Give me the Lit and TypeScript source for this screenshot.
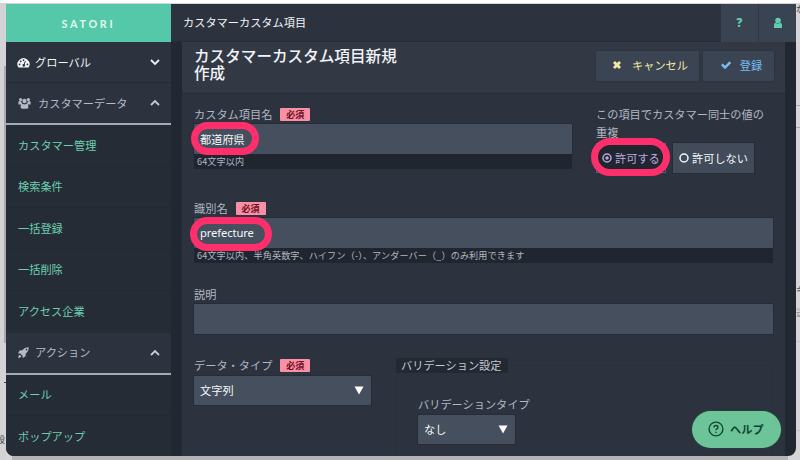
import { LitElement, html, css, svg } from "lit";
import { customElement, property } from "lit/decorators.js";

const gauge = svg`<path fill-rule="evenodd" d="M1.6 12.500A6.500 6.500 0 1 1 12.4 12.500Z M2.800 8.200a.9.9 0 1 0 .01 0Z M4 4.900a.9.9 0 1 0 .01 0Z M7 3.500a.9.9 0 1 0 .01 0Z M11.200 8.200a.9.9 0 1 0 .01 0Z M8.600 5.200L7.300 8.600A1.400 1.400 0 1 0 8.300 9L9.500 5.500Z"/>`;
const users = svg`<circle cx="2.8" cy="2.8" r="1.7"/><circle cx="11.2" cy="2.8" r="1.7"/><circle cx="7" cy="4.4" r="2.4"/><path d="M.4 8V6q0-1.600 1.500-1.600L3.700 5q0 2 1 2.500Q3.400 7.400 3 8ZM13.600 8V6q0-1.600-1.500-1.600L10.300 5q0 2-1 2.500Q10.600 7.400 11 8ZM2.800 11q0-3.700 2.200-3.700Q7 8.600 9 7.300q2.200 0 2.200 3.700 0 1.600-1.600 1.600H4.400Q2.800 12.600 2.800 11Z"/>`;
const rocket = svg`<path fill-rule="evenodd" d="M12.600 1.400Q8.300 1.100 5.700 4.600L2.900 4.800 1 7.900 3.500 8 6 10.500 6.100 13 9.200 11.100 9.400 8.300Q12.900 5.700 12.600 1.400ZM10.300 3a.8.8 0 1 0 .01 0ZM3 9.300Q1.300 9.900 1.200 12.800 4.100 12.700 4.700 11Z"/>`;

@customElement("nav-head")
class NavHead extends LitElement {
  @property() icon = "";
  @property() label = "";
  @property({ type: Boolean, reflect: true }) open = false;
  static styles = css`
    :host { display: flex; align-items: center; box-sizing: border-box; height: 41px; padding: 0 10px 0 11px; color: #f3f5f8; font-size: 11.2px; background: #2c333e; border-bottom: 1px solid #252b35; }
    :host([open]) { height: 42px; color: #b4bbc8; border-bottom: 2px solid #a3abb7; }
    .icon { width: 13px; height: 13px; fill: currentColor; flex: none; }
    .icon.wide { margin-left: 1px; }
    .label { flex: 1; margin-left: 5px; padding-bottom: 1px; white-space: nowrap; }
    .label.wide { margin-left: 7px; }
    .chev { width: 12px; height: 12px; fill: none; stroke: #eef0f4; stroke-width: 1.8; }
    :host([open]) .chev { stroke: #c5cad4; }
  `;
  render() {
    const glyph = this.icon === "gauge" ? gauge : this.icon === "users" ? users : rocket;
    const wide = this.icon === "users" ? "wide" : "";
    return html`<svg class="icon ${wide}" viewBox="0 0 14 14">${glyph}</svg>
      <span class="label ${wide}">${this.label}</span>
      <svg class="chev" viewBox="0 0 12 12"><path d=${this.open ? "M2 8L6 4L10 8" : "M2 4L6 8L10 4"} /></svg>`;
  }
}

@customElement("app-root")
class AppRoot extends LitElement {
  static styles = css`
    :host { display: block; position: relative; width: 800px; height: 460px; overflow: hidden; box-sizing: border-box; padding: 4px 4px 4px 6px; background: linear-gradient(#fff 3px, #d6d6d8 3px); font-family: "Noto Sans CJK JP", sans-serif; font-size: 11.2px; line-height: 16px; color: #b1b8c4; }
    * { box-sizing: border-box; }
    .backdrop { position: absolute; inset: 3px 0 0; background: linear-gradient(#aaa, #aaa) 4px 63px / 2px 277px no-repeat, linear-gradient(90deg, #d3d3d5 0, #d3d3d5 6px, transparent 6px), linear-gradient(#b4b4b4, #b4b4b4) 12px 453px / 776px 4px no-repeat, #d6d6d8; }
    .bit { position: absolute; font-size: 9px; line-height: 12px; color: #3b3b3f; width: 5px; overflow: hidden; white-space: nowrap; }
    .b1 { right: 0; top: 4px; width: 4px; }
    .b2 { right: 0; top: 284px; width: 4px; }
    .b3 { right: 0; top: 307px; width: 4px; color: #888; }
    .b4 { left: 0; top: 434px; direction: rtl; }
    .b5 { left: 4px; top: 382px; width: 2px; height: 1px; background: #444; }
    .rule { position: absolute; right: 0; width: 4px; height: 1px; background: #aaa; }
    .r1 { top: 105px; } .r2 { top: 127px; } .r3 { top: 341px; background: #c2c3d0; } .r4 { top: 430px; background: #c2c3d0; }
    .window { position: relative; display: grid; grid-template: 38px 414px / 165px 625px; height: 452px; border-radius: 0 0 8px 8px; overflow: hidden; background: #222831; }
    .brand { display: flex; align-items: center; justify-content: center; background: #54c8a8; color: #e0faf1; font: 700 10.8px Lato, sans-serif; letter-spacing: 2.7px; }
    .top { display: flex; align-items: center; padding-left: 12px; background: #2c333e; color: #f3f5f8; border-bottom: 1px solid #262c36; }
    .crumb { flex: 1; padding-bottom: 1px; }
    .tool { width: 37px; height: 38px; background: #3a4351; display: grid; place-items: center; color: #5fceb0; font: 900 11.5px "Noto Sans", sans-serif; }
    .tool + .tool { border-left: 1px solid #2e3643; width: 38px; }
    .tool svg { width: 10px; height: 12px; fill: #5fceb0; }
    .side { background: #262c36; }
    .side a { display: flex; align-items: center; height: 41.5px; padding: 0 0 1px 12px; color: #6bcfb0; border-bottom: 1px solid #232933; }
    .side a.last { border: 0; padding-bottom: 2px; }
    .panel { width: 603px; margin-left: 11px; background: #2c333e; overflow: hidden; }
    .head { display: flex; height: 52px; padding: 8px 11px 0 12px; background: #323945; border-bottom: 1px solid #272d37; }
    h1 { margin: -3px 0 0; width: 402px; font-size: 15.6px; font-weight: 500; line-height: 17px; color: #f1f3f7; }
    .btn { display: flex; align-items: center; justify-content: center; height: 30px; background: #3a4452; margin-top: 1px; border-radius: 1px; white-space: nowrap; box-shadow: 0 0 2px #222933; padding-bottom: 2px; }
    .cancel { width: 103px; color: #f3e7a2; gap: 10px; margin-right: 4px; padding-left: 5px; }
    .submit { width: 71px; color: #79bdf0; gap: 9px; padding-left: 6px; }
    .btn svg { width: 10px; height: 10px; fill: currentColor; }
    .form { padding: 12px 12px 0; }
    .row1 { display: grid; grid-template-columns: 378px 178px; column-gap: 24px; height: 94px; }
    .lbl { display: flex; align-items: center; height: 18px; padding-bottom: 2px; white-space: nowrap; }
    .req { width: 30px; height: 13px; margin: 1px 0 0 8px; display: grid; place-items: center; background: #f990a5; color: #6e0f22; font-size: 9px; font-weight: 700; line-height: 13px; border-radius: 1px; }
    .input { display: flex; align-items: center; height: 30px; padding: 0 6px 1px; background: #454f5e; color: #f5f7fa; box-shadow: 0 0 0 1px #252c37; border-radius: 1px; }
    .latin { font-family: "Noto Sans", sans-serif; letter-spacing: -.1px; }
    .note { height: 15px; padding-left: 3px; background: #20262f; font-size: 9.1px; line-height: 15px; white-space: nowrap; letter-spacing: .13px; }
    .wrapped { line-height: 18px; margin: -1px 0 2px; }
    .radios { display: flex; gap: 7px; }
    .radio { display: flex; align-items: center; height: 30px; padding: 0 0 1px 6px; gap: 3px; width: 81px; background: #414b5a; color: #f5f7fa; white-space: nowrap; box-shadow: 0 0 0 1px #252c37; }
    .radio.on { width: 70px; background: #20262f; color: #bda5df; box-shadow: none; border: 1px solid #59616e; padding-left: 5px; }
    .radio svg { width: 10px; height: 10px; fill: none; stroke: currentColor; stroke-width: 1.5; flex: none; }
    .row2 { height: 86px; }
    .row3 { height: 71px; }
    .row4 { display: grid; grid-template-columns: 177px 377px; column-gap: 25px; }
    .select { justify-content: space-between; height: 29px; padding-right: 7px; margin-top: 1px; }
    .select svg { width: 10px; height: 9px; fill: #fff; }
    .set { position: relative; height: 120px; margin-top: 8px; border: 1px solid #28303a; padding: 30px 0 0 21px; }
    .legend { position: absolute; left: -1px; top: -8px; height: 15px; width: 112px; padding-left: 5px; line-height: 14px; background: #232932; color: #c3c8d1; white-space: nowrap; }
    .set .select { width: 97px; margin-top: 1px; }
    .ring { position: absolute; border: 7px solid #ff2f6b; border-radius: 18px; }
    .g1 { left: 191px; top: 122px; width: 68px; height: 33px; }
    .g2 { left: 190px; top: 217px; width: 82px; height: 34px; }
    .g3 { left: 591px; top: 138px; width: 79px; height: 38px; border-radius: 19px; }
    .help { position: absolute; left: 692px; top: 411px; width: 89px; height: 37px; border-radius: 19px; background: #6cc498; color: #0d4734; display: flex; align-items: center; gap: 6px; padding: 0 0 1px 16px; font-weight: 700; white-space: nowrap; box-shadow: 0 0 2px #1f5445; }
    .help svg { width: 16px; height: 16px; fill: none; stroke: currentColor; stroke-width: 1.4; }
  `;
  tri() { return html`<svg viewBox="0 0 10 9"><path d="M.5.5H9.500L5 8.500Z" /></svg>`; }
  render() {
    return html`
      <div class="backdrop"></div>
      <span class="bit b1">な</span><span class="bit b2">キ</span><span class="bit b3">送</span><span class="bit b4">殺</span><span class="bit b5"></span>
      <i class="rule r1"></i><i class="rule r2"></i><i class="rule r3"></i><i class="rule r4"></i>
      <div class="window">
        <div class="brand"><span>SATORI</span></div>
        <div class="top">
          <span class="crumb">カスタマーカスタム項目</span>
          <span class="tool">?</span>
          <span class="tool"><svg viewBox="0 0 10 12"><circle cx="5" cy="3.600" r="2.800" /><path d="M1 11Q.6 5.800 2.700 5.800Q5 8 7.300 5.800Q9.400 5.800 9 11Z" /></svg></span>
        </div>
        <nav class="side">
          <nav-head icon="gauge" label="グローバル"></nav-head>
          <nav-head icon="users" label="カスタマーデータ" open></nav-head>
          ${["カスタマー管理", "検索条件", "一括登録", "一括削除", "アクセス企業"].map((t, i) => html`<a class=${i === 4 ? "last" : ""}>${t}</a>`)}
          <nav-head icon="rocket" label="アクション" open></nav-head>
          <a>メール</a><a class="last">ポップアップ</a>
        </nav>
        <main class="panel">
          <header class="head">
            <h1>カスタマーカスタム項目新規<br />作成</h1>
            <div class="btn cancel"><svg viewBox="0 0 10 10"><path d="M3 1L5 3L7 1L9 3L7 5L9 7L7 9L5 7L3 9L1 7L3 5L1 3Z" /></svg>キャンセル</div>
            <div class="btn submit"><svg viewBox="0 0 10 10"><path d="M0 5.200L1.700 3.500L4 5.800L8.500 1.300L10.200 3L4 9.200Z" /></svg>登録</div>
          </header>
          <div class="form">
            <div class="row1">
              <div>
                <div class="lbl">カスタム項目名<span class="req">必須</span></div>
                <div class="input">都道府県</div>
                <div class="note">64文字以内</div>
              </div>
              <div>
                <div class="wrapped">この項目でカスタマー同士の値の<br />重複</div>
                <div class="radios">
                  <div class="radio on"><svg viewBox="0 0 10 10"><circle cx="5" cy="5" r="4" /><circle cx="5" cy="5" r="1" /></svg>許可する</div>
                  <div class="radio"><svg viewBox="0 0 10 10"><circle cx="5" cy="5" r="4" /></svg>許可しない</div>
                </div>
              </div>
            </div>
            <div class="row2">
              <div class="lbl">識別名<span class="req">必須</span></div>
              <div class="input latin">prefecture</div>
              <div class="note">64文字以内、半角英数字、ハイフン（-）、アンダーバー（_）のみ利用できます</div>
            </div>
            <div class="row3">
              <div class="lbl">説明</div>
              <div class="input"></div>
            </div>
            <div class="row4">
              <div>
                <div class="lbl">データ・タイプ<span class="req">必須</span></div>
                <div class="input select">文字列${this.tri()}</div>
              </div>
              <div class="set">
                <span class="legend">バリデーション設定</span>
                <div class="lbl">バリデーションタイプ</div>
                <div class="input select">なし${this.tri()}</div>
              </div>
            </div>
          </div>
        </main>
      </div>
      <div class="ring g1"></div><div class="ring g2"></div><div class="ring g3"></div>
      <div class="help"><svg viewBox="0 0 16 16"><circle cx="8" cy="8" r="6.900" /><path d="M6 6.500Q6 4.500 8 4.500T10 6.300Q10 7.300 8.900 7.900Q8 8.400 8 9.300M8 10.700V12" /></svg>ヘルプ</div>
    `;
  }
}
